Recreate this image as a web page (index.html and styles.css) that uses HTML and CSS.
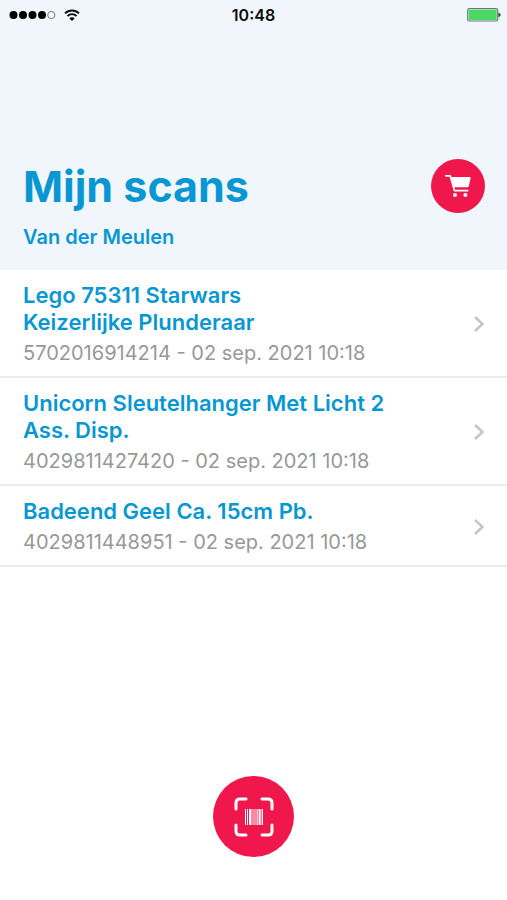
FILE: index.html
```
<!DOCTYPE html>
<html lang="nl">
<head>
<meta charset="utf-8">
<meta name="viewport" content="width=device-width, initial-scale=1">
<title>Mijn scans</title>
<link rel="stylesheet" href="styles.css">
</head>
<body>
<header class="header">
  <div class="status">
    <div class="status-signal">
      <svg width="47" height="10" viewBox="0 0 47 10" aria-hidden="true">
        <circle cx="4.500" cy="5" r="4"/><circle cx="14" cy="5" r="4"/><circle cx="23.500" cy="5" r="4"/><circle cx="33" cy="5" r="4"/>
        <circle cx="42.300" cy="5" r="3.600" fill="none" stroke="#777a80" stroke-width="1"/>
      </svg>
      <svg width="16" height="12" viewBox="0 0 16 12" aria-hidden="true">
        <path d="M1 4.400a10 10 0 0 1 14 0M3.500 7a6.400 6.400 0 0 1 9 0" fill="none" stroke="#0b0c0e" stroke-width="1.900"/>
        <path d="M8 12 5.500 9.400a3.600 3.600 0 0 1 5 0z"/>
      </svg>
    </div>
    <time class="status-time">10:48</time>
    <div class="status-battery">
      <svg width="34" height="14" viewBox="0 0 34 14" aria-hidden="true">
        <rect x=".700" y=".700" width="30" height="12.300" rx="1.500" fill="#eef8f2" stroke="#70757a" stroke-width="1.200"/>
        <rect x="1.700" y="1.700" width="28" height="10.300" rx=".500" fill="#4bd763"/>
        <path d="M31.500 4.800c1.200.2 2 1 2 2.100s-.8 1.900-2 2.100z" fill="#333"/>
      </svg>
    </div>
  </div>
  <div class="heading">
    <div>
      <h1 class="title">Mijn scans</h1>
      <p class="subtitle">Van der Meulen</p>
    </div>
    <button class="round cart" type="button" aria-label="Winkelwagen">
      <svg width="54" height="54" viewBox="0 0 54 54" aria-hidden="true">
        <path d="M14.800 16.800h4.400l4.200 14.800h13.300" fill="none" stroke="#fff" stroke-width="1.700" stroke-linecap="round" stroke-linejoin="round"/>
        <path d="M20 18h18.600q1.200 0 1 1.200L37.800 27q-.3 1.300-1.500 1.300H23z" fill="#fff"/>
        <circle cx="24" cy="36" r="2" fill="#fff"/><circle cx="34.400" cy="36" r="2" fill="#fff"/>
      </svg>
    </button>
  </div>
</header>
<main class="main">
  <ul class="list">
    <li><a class="row" href="#lego">
      <span class="text"><span class="name">Lego 75311 Starwars<br>Keizerlijke Plunderaar</span><span class="meta">5702016914214 - 02 sep. 2021 10:18</span></span>
      <svg class="chevron" width="12" height="18" viewBox="0 0 12 18" aria-hidden="true"><path d="m2 2 7.500 7L2 16"/></svg>
    </a></li>
    <li><a class="row" href="#unicorn">
      <span class="text"><span class="name">Unicorn Sleutelhanger Met Licht 2<br>Ass. Disp.</span><span class="meta">4029811427420 - 02 sep. 2021 10:18</span></span>
      <svg class="chevron" width="12" height="18" viewBox="0 0 12 18" aria-hidden="true"><path d="m2 2 7.500 7L2 16"/></svg>
    </a></li>
    <li><a class="row" href="#badeend">
      <span class="text"><span class="name">Badeend Geel Ca. 15cm Pb.</span><span class="meta">4029811448951 - 02 sep. 2021 10:18</span></span>
      <svg class="chevron" width="12" height="18" viewBox="0 0 12 18" aria-hidden="true"><path d="m2 2 7.500 7L2 16"/></svg>
    </a></li>
  </ul>
</main>
<footer class="footer">
  <button class="round scan" type="button" aria-label="Scan barcode">
    <svg width="40" height="40" viewBox="0 0 40 40" aria-hidden="true">
      <g fill="none" stroke="#fff" stroke-width="3" stroke-linecap="round">
        <path d="M2 12V6q0-4 4-4h6M28 2h6q4 0 4 4v6M38 28v6q0 4-4 4h-6M12 38H6q-4 0-4-4v-6"/>
      </g>
      <path fill="#fff" d="M11 12h1v16h-1zM13 12h1v16h-1zM15 12h2.500v16H15zM18.500 12h1v16h-1zM20.500 12h1v16h-1zM22.500 12h1.200v16h-1.200zM24.500 12h2.200v16h-2.200zM27.600 12h1.400v16h-1.400z"/>
    </svg>
  </button>
</footer>
</body>
</html>
```
FILE: styles.css
```
* {
  box-sizing: border-box;
}

body {
  display: flex;
  flex-direction: column;
  min-height: 100vh;
  margin: 0;
  background: #fff;
  color: #0b0c0e;
  font-family: Inter, "Liberation Sans", sans-serif;
}

svg {
  display: block;
}

.header {
  padding-bottom: 20px;
  background: #f1f6fd;
}

.status {
  display: grid;
  grid-template-columns: 1fr auto 1fr;
  align-items: center;
  height: 30px;
  padding: 0 6px;
}

.status-signal {
  display: flex;
  align-items: center;
  gap: 8px;
  padding-left: 3px;
}

.status-time {
  font-size: 16px;
  font-weight: 600;
  line-height: 20px;
}

.status-battery {
  justify-self: end;
}

.heading {
  display: flex;
  justify-content: space-between;
  align-items: flex-start;
  padding: 129px 22px 0 23px;
}

.title {
  margin: 0;
  color: #0997d3;
  font-size: 43px;
  font-weight: 700;
  line-height: 55px;
}

.subtitle {
  margin: 10px 0 0;
  color: #0997d3;
  font-size: 20px;
  font-weight: 600;
  line-height: 26px;
}

.round {
  display: flex;
  flex: none;
  align-items: center;
  justify-content: center;
  padding: 0;
  border: 0;
  border-radius: 50%;
  background: #ef174b;
  cursor: pointer;
}

.cart {
  width: 54px;
  height: 54px;
}

.scan {
  width: 81px;
  height: 81px;
}

.main {
  flex: 1;
}

.list {
  margin: 0;
  padding: 0;
  list-style: none;
}

.row {
  display: flex;
  align-items: center;
  justify-content: space-between;
  padding: 12px 22px 10px 23px;
  border-bottom: 2px solid #ebebeb;
  text-decoration: none;
}

.name,
.meta {
  display: block;
}

.name {
  color: #0997d3;
  font-size: 22px;
  font-weight: 600;
  line-height: 27px;
}

.meta {
  margin-top: 4px;
  color: #989898;
  font-size: 20px;
  line-height: 26px;
}

.chevron {
  flex: none;
  fill: none;
  stroke: #c5c5c7;
  stroke-width: 2.500;
}

.footer {
  display: flex;
  justify-content: center;
  padding-bottom: 43px;
}
```
